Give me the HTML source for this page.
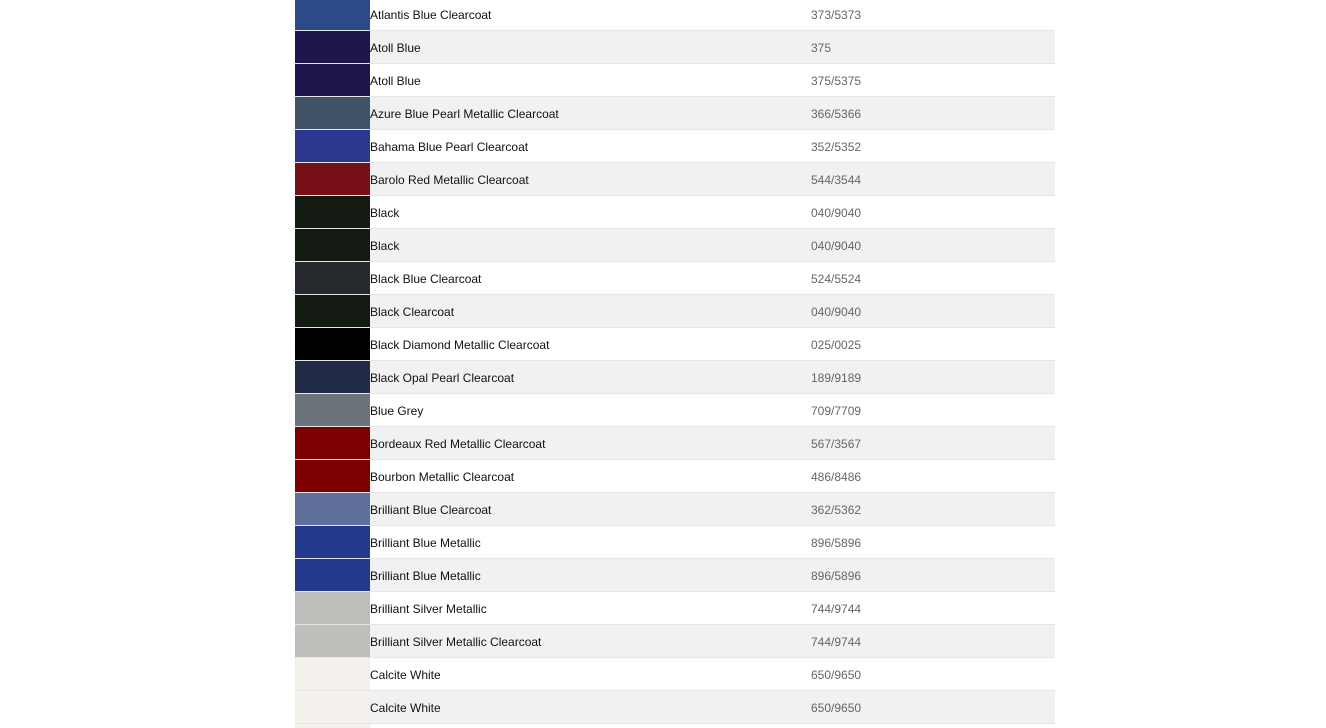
<!DOCTYPE html>
<html><head><meta charset="utf-8"><style>
html,body{margin:0;background:#fff;width:1326px;height:728px;overflow:hidden}
body{position:relative;font-family:"Liberation Sans",sans-serif;font-size:12px}
.r{position:absolute;left:295px;width:760px;height:32px;border-bottom:1px solid #e6e6e6}
.r.g{background:#f1f1f1}
.s{position:absolute;left:0;top:0;width:75px;height:32px}
.n{position:absolute;left:75px;top:10px;color:#111}
.c{position:absolute;left:516px;top:10px;color:#666}
</style></head><body>
<div class="r" style="top:-2px"><div class="s" style="background:#2c4b86"></div><div class="n">Atlantis Blue Clearcoat</div><div class="c">373/5373</div></div>
<div class="r g" style="top:31px"><div class="s" style="background:#1f154a"></div><div class="n">Atoll Blue</div><div class="c">375</div></div>
<div class="r" style="top:64px"><div class="s" style="background:#1f154a"></div><div class="n">Atoll Blue</div><div class="c">375/5375</div></div>
<div class="r g" style="top:97px"><div class="s" style="background:#3f5266"></div><div class="n">Azure Blue Pearl Metallic Clearcoat</div><div class="c">366/5366</div></div>
<div class="r" style="top:130px"><div class="s" style="background:#2c3790"></div><div class="n">Bahama Blue Pearl Clearcoat</div><div class="c">352/5352</div></div>
<div class="r g" style="top:163px"><div class="s" style="background:#761016"></div><div class="n">Barolo Red Metallic Clearcoat</div><div class="c">544/3544</div></div>
<div class="r" style="top:196px"><div class="s" style="background:#121a12"></div><div class="n">Black</div><div class="c">040/9040</div></div>
<div class="r g" style="top:229px"><div class="s" style="background:#121a12"></div><div class="n">Black</div><div class="c">040/9040</div></div>
<div class="r" style="top:262px"><div class="s" style="background:#26292e"></div><div class="n">Black Blue Clearcoat</div><div class="c">524/5524</div></div>
<div class="r g" style="top:295px"><div class="s" style="background:#121a12"></div><div class="n">Black Clearcoat</div><div class="c">040/9040</div></div>
<div class="r" style="top:328px"><div class="s" style="background:#000"></div><div class="n">Black Diamond Metallic Clearcoat</div><div class="c">025/0025</div></div>
<div class="r g" style="top:361px"><div class="s" style="background:#212b45"></div><div class="n">Black Opal Pearl Clearcoat</div><div class="c">189/9189</div></div>
<div class="r" style="top:394px"><div class="s" style="background:#6c737a"></div><div class="n">Blue Grey</div><div class="c">709/7709</div></div>
<div class="r g" style="top:427px"><div class="s" style="background:#7d0000"></div><div class="n">Bordeaux Red Metallic Clearcoat</div><div class="c">567/3567</div></div>
<div class="r" style="top:460px"><div class="s" style="background:#7d0000"></div><div class="n">Bourbon Metallic Clearcoat</div><div class="c">486/8486</div></div>
<div class="r g" style="top:493px"><div class="s" style="background:#5e6f9a"></div><div class="n">Brilliant Blue Clearcoat</div><div class="c">362/5362</div></div>
<div class="r" style="top:526px"><div class="s" style="background:#233a8c"></div><div class="n">Brilliant Blue Metallic</div><div class="c">896/5896</div></div>
<div class="r g" style="top:559px"><div class="s" style="background:#233a8c"></div><div class="n">Brilliant Blue Metallic</div><div class="c">896/5896</div></div>
<div class="r" style="top:592px"><div class="s" style="background:#bfbeba"></div><div class="n">Brilliant Silver Metallic</div><div class="c">744/9744</div></div>
<div class="r g" style="top:625px"><div class="s" style="background:#bfbeba"></div><div class="n">Brilliant Silver Metallic Clearcoat</div><div class="c">744/9744</div></div>
<div class="r" style="top:658px"><div class="s" style="background:#f4f1ec"></div><div class="n">Calcite White</div><div class="c">650/9650</div></div>
<div class="r g" style="top:691px"><div class="s" style="background:#f4f1ec"></div><div class="n">Calcite White</div><div class="c">650/9650</div></div>
<div class="r" style="top:724px"><div class="s" style="background:#f4f1ec"></div></div>
</body></html>
